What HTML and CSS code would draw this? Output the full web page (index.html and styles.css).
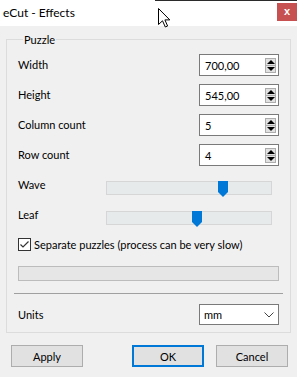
FILE: index.html
```html
<!DOCTYPE html>
<html lang="en">
<head>
  <meta charset="UTF-8">
  <title>eCut - Effects</title>
  <link rel="stylesheet" href="styles.css">
</head>
<body>

<div class="window">
  <!-- Title bar -->
  <div class="titlebar">
    <span class="title">eCut - Effects</span>
    <span class="close">x</span>
  </div>

  <div class="client">
    <fieldset class="group">
      <legend>Puzzle</legend>

      <div class="row">
        <span class="label">Width</span>
        <div class="spinbox">
          <span class="value">700,00</span>
          <div class="spin"><span class="up"></span><span class="down"></span></div>
        </div>
      </div>
      <div class="row">
        <span class="label">Height</span>
        <div class="spinbox">
          <span class="value">545,00</span>
          <div class="spin"><span class="up"></span><span class="down"></span></div>
        </div>
      </div>
      <div class="row">
        <span class="label">Column count</span>
        <div class="spinbox">
          <span class="value">5</span>
          <div class="spin"><span class="up"></span><span class="down"></span></div>
        </div>
      </div>
      <div class="row">
        <span class="label">Row count</span>
        <div class="spinbox">
          <span class="value">4</span>
          <div class="spin"><span class="up"></span><span class="down"></span></div>
        </div>
      </div>

      <div class="slider-row">
        <span class="label">Wave</span>
        <div class="track">
          <svg class="thumb" style="left: 111px" width="10" height="16" viewBox="0 0 10 16"><polygon points="0,0 10,0 10,11 5,16 0,11" fill="#0078d7"/></svg>
        </div>
      </div>
      <div class="slider-row">
        <span class="label">Leaf</span>
        <div class="track">
          <svg class="thumb" style="left: 85px" width="10" height="16" viewBox="0 0 10 16"><polygon points="0,0 10,0 10,11 5,16 0,11" fill="#0078d7"/></svg>
        </div>
      </div>

      <div class="check-row">
        <svg class="checkbox" width="13" height="13" viewBox="0 0 13 13">
          <rect x="0.5" y="0.5" width="12" height="12" fill="#fff" stroke="#333"/>
          <polyline points="2.5,6.5 5,9 10.5,3.5" fill="none" stroke="#333" stroke-width="1.2"/>
        </svg>
        <span>Separate puzzles (process can be very slow)</span>
      </div>

      <div class="progress"></div>

      <hr class="sep">

      <div class="units-row">
        <span class="label">Units</span>
        <div class="combo">
          <span class="value">mm</span>
          <svg width="10" height="6" viewBox="0 0 10 6"><polyline points="0.5,0.5 5,5 9.5,0.5" fill="none" stroke="#444" stroke-width="1"/></svg>
        </div>
      </div>
    </fieldset>

    <div class="buttons">
      <button class="btn">Apply</button>
      <span class="spacer"></span>
      <button class="btn default">OK</button>
      <button class="btn">Cancel</button>
    </div>
  </div>

  <!-- mouse pointer over the title bar -->
  <svg class="cursor" width="13" height="20" viewBox="0 0 13 20">
    <path d="M0.5 0.5 L0.5 16.5 L4.5 12.8 L7.3 19 L9.6 18 L6.9 11.9 L11.8 11.9 Z" fill="#fff" stroke="#000" stroke-width="1" stroke-linejoin="miter"/>
  </svg>
</div>

</body>
</html>
```

FILE: styles.css
```css
* {
  box-sizing: border-box;
}
body {
  margin: 0;
  font-family: 'Segoe UI', Lato, 'Noto Sans', sans-serif;
  font-size: 11px;
  color: #000;
  background: #f0f0f0;
}
.window {
  position: relative;
  width: 297px;
  height: 377px;
  overflow: hidden;
  background: #f0f0f0;
}
.titlebar {
  height: 26px;
  background: linear-gradient(to right, #fff 155px, #2b2b2b 155px) top / 100% 1px no-repeat, #fff;
  display: flex;
  align-items: flex-start;
  justify-content: space-between;
}
.title {
  margin: 4px 0 0 3px;
  font-size: 12px;
  line-height: 17px;
}
.close {
  margin-top: 3px;
  width: 20px;
  height: 18px;
  background: #c75050;
  color: #fff;
  font-family: 'Liberation Sans', sans-serif;
  font-weight: bold;
  font-size: 11px;
  line-height: 16px;
  text-align: center;
}
.client {
  padding: 0 0 0 6px;
}
.group {
  margin: 6px 0 0 0;
  width: 285px;
  padding: 3px 11px 3px 11px;
  border: 1px solid #dcdcdc;
}
.group legend {
  padding: 0 1px;
  margin-left: 5px;
  line-height: 15px;
}
.row {
  height: 30px;
  display: flex;
  align-items: center;
  justify-content: space-between;
}
.spinbox {
  width: 80px;
  height: 22px;
  border: 1px solid #7a7a7a;
  background: #fff;
  display: flex;
  align-items: center;
  justify-content: space-between;
  padding-left: 5px;
}
.spin {
  display: flex;
  flex-direction: column;
  margin-right: 2px;
}
.spin span {
  width: 11px;
  height: 8px;
  border: 1px solid #adadad;
  background: #e1e1e1;
  position: relative;
}
.spin span + span {
  margin-top: -1px;
}
.spin .up::after,
.spin .down::after {
  content: "";
  position: absolute;
  left: 1px;
  border-left: 4px solid transparent;
  border-right: 4px solid transparent;
}
.spin .up::after {
  top: 1px;
  border-bottom: 4px solid #000;
}
.spin .down::after {
  top: 1px;
  border-top: 4px solid #000;
}
.slider-row {
  height: 30px;
  padding-top: 7px;
  display: flex;
  align-items: flex-start;
  justify-content: space-between;
}
.label {
  line-height: 16px;
}
.track {
  position: relative;
  width: 166px;
  height: 14px;
  margin-top: 4px;
  margin-right: 7px;
  background: #e7eaea;
  border: 1px solid #d6d6d6;
}
.thumb {
  position: absolute;
  top: -1px;
  display: block;
}
.check-row {
  height: 28px;
  display: flex;
  align-items: center;
  gap: 3px;
}
.checkbox {
  display: block;
}
.progress {
  margin-top: 8px;
  height: 15px;
  background: #e6e6e6;
  border: 1px solid #bcbcbc;
}
.sep {
  margin: 12px -4px 0 -4px;
  border: none;
  border-top: 1px solid #a0a0a0;
  height: 0;
}
.units-row {
  margin-top: 6px;
  height: 29px;
  display: flex;
  align-items: center;
  justify-content: space-between;
}
.combo {
  width: 80px;
  height: 21px;
  border: 1px solid #7a7a7a;
  background: #fff;
  display: flex;
  align-items: center;
  justify-content: space-between;
  padding: 0 4px 0 4px;
}
.combo svg {
  display: block;
}
.buttons {
  margin-top: 12px;
  padding-left: 5px;
  display: flex;
  gap: 12px;
}
.spacer {
  width: 25px;
}
.btn {
  width: 72px;
  height: 22px;
  padding: 0;
  font-family: inherit;
  font-size: 11px;
  color: #000;
  background: #e1e1e1;
  border: 1px solid #adadad;
  border-radius: 0;
}
.btn.default {
  border: 2px solid #0078d7;
}
.cursor {
  position: absolute;
  left: 158px;
  top: 8px;
}
```
